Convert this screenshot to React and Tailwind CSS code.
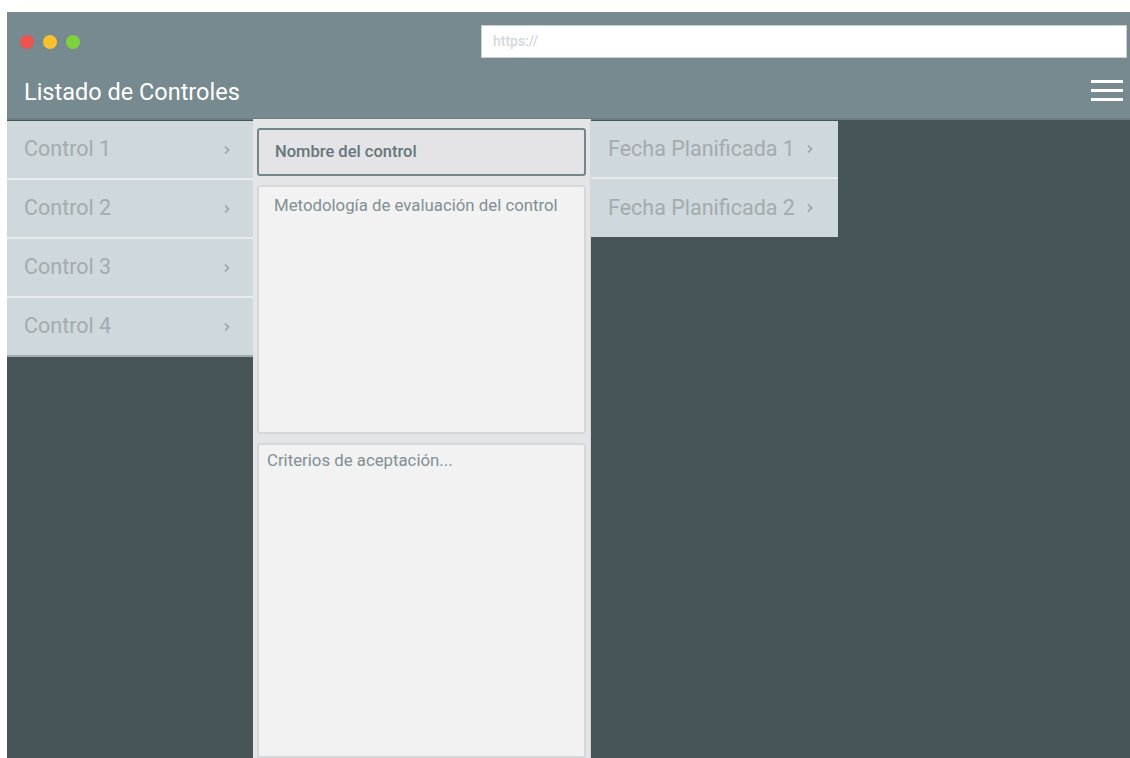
import React from "react";

const font = { fontFamily: "Roboto, 'Noto Sans', sans-serif" };

function Chevron() {
  return (
    <svg width="8" height="10" viewBox="0 0 8 10" className="shrink-0">
      <path d="M2 1.5 L5.5 5 L2 8.5" fill="none" stroke="currentColor" strokeWidth="1.7" />
    </svg>
  );
}

function ListItem({ label, last = false }) {
  return (
    <div
      className={`flex h-[59px] items-center justify-between border-b-2 bg-[#cfd8dc] pl-[17px] pr-[22px] text-[21.5px] text-[#a4abae] ${
        last ? "border-[#a3acaf]" : "border-[#e8ecee]"
      }`}
    >
      <span>{label}</span>
      <span className="text-[#9aa3a6]">
        <Chevron />
      </span>
    </div>
  );
}

function DateItem({ label, last = false }) {
  return (
    <div
      className={`flex h-[58px] items-center gap-[11px] bg-[#cfd8dc] pl-[17px] text-[21.5px] text-[#a4abae] ${
        last ? "" : "border-b-2 border-[#e8ecee]"
      }`}
    >
      <span>{label}</span>
      <span className="text-[#9aa3a6]">
        <Chevron />
      </span>
    </div>
  );
}

export default function App() {
  return (
    <div className="h-[758px] w-[1130px] overflow-hidden bg-white pl-[7px] pt-[12px]" style={font}>
      <div className="flex h-[746px] flex-col">
        {/* window chrome + app header */}
        <div className="h-[108px] shrink-0 border-b-2 border-[#6c7d82] bg-[#778a8f]">
          <div className="flex h-[60px] items-start">
            <div className="flex items-center gap-[9px] pl-[13px] pt-[23px]">
              <span className="h-[14px] w-[14px] rounded-full bg-[#ef5350]" />
              <span className="h-[14px] w-[14px] rounded-full bg-[#fbc02d]" />
              <span className="h-[14px] w-[14px] rounded-full bg-[#7cd23a]" />
            </div>
            <div className="ml-[401px] mt-[13px] flex h-[33px] w-[646px] items-center border border-[#c7d0d3] bg-white pl-[11px] text-[14px] font-medium text-[#d2d9dc]">
              https://
            </div>
          </div>
          <div className="flex items-start justify-between pl-[17px] pr-[7px]">
            <span className="mt-[5px] text-[23.5px] leading-[30px] text-white">Listado de Controles</span>
            <div className="mt-[8px] flex flex-col gap-[6px]">
              <span className="h-[3px] w-[32px] bg-white" />
              <span className="h-[3px] w-[32px] bg-white" />
              <span className="h-[3px] w-[32px] bg-white" />
            </div>
          </div>
        </div>

        {/* content */}
        <div className="flex min-h-0 flex-1 bg-[#465357]">
          <div className="flex w-[246px] shrink-0 flex-col pt-[1px]">
            <ListItem label="Control 1" />
            <ListItem label="Control 2" />
            <ListItem label="Control 3" />
            <ListItem label="Control 4" last />
          </div>

          <div className="-mt-[1px] flex w-[338px] shrink-0 flex-col gap-[9px] border-r border-[#d3d5d7] bg-[#e4e5e6] px-[4px] pt-[9px]">
            <div className="flex h-[48px] shrink-0 items-center rounded-[3px] border-2 border-[#76858a] bg-[#e4e4e6] pl-[16px] text-[16.5px] font-medium text-[#66767b]">
              Nombre del control
            </div>
            <div className="h-[249px] shrink-0 rounded-[3px] border-2 border-[#d6d7d9] bg-[#f2f2f2] px-[15px] pt-[6px] text-[16.8px] text-[#808f94]">
              Metodología de evaluación del control
            </div>
            <div className="min-h-0 flex-1 rounded-[3px] border-2 border-[#d6d7d9] bg-[#f2f2f2] px-[8px] pt-[3px] text-[16.8px] text-[#808f94]">
              Criterios de aceptación...
            </div>
          </div>

          <div className="flex w-[247px] shrink-0 flex-col pt-[1px]">
            <DateItem label="Fecha Planificada 1" />
            <DateItem label="Fecha Planificada 2" last />
          </div>
        </div>
      </div>
    </div>
  );
}
